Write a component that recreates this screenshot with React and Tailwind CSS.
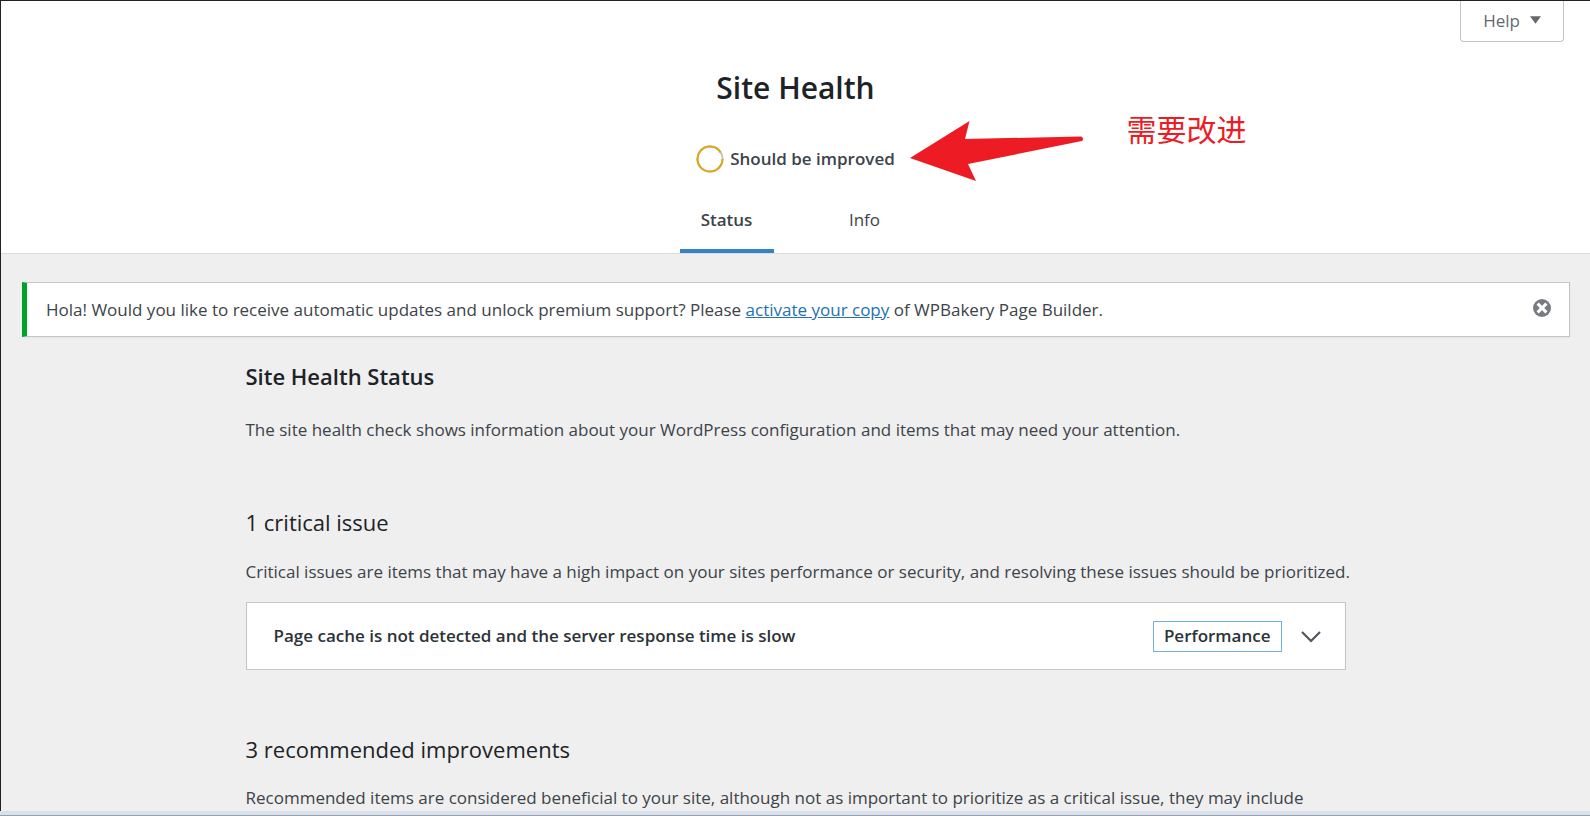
function ProgressRing() {
  return (
    <svg className="size-7" viewBox="0 0 28 28" fill="none" strokeWidth="2" aria-hidden="true">
      <circle cx="14" cy="14" r="12.5" stroke="#c3c4c7" />
      <path d="M26.5 14A12.5 12.5 0 1 1 24.6 7.4" stroke="#dba617" />
    </svg>
  );
}

function Callout() {
  return (
    <div className="absolute left-1/2 top-[106px] ml-[113px] flex gap-[42px]">
      <svg className="mt-[13px] h-[62px] w-[176px]" viewBox="0 0 176 62" fill="#ed1c24" aria-hidden="true">
        <path d="M1 38 60.5 1 56 19 172 16.5a2.5 2.5 0 0 1 .8 4.6L59 44l8 17z" />
      </svg>
      <p className="whitespace-nowrap font-['Noto_Sans_CJK_SC',sans-serif] text-[30px] leading-[42px] text-[#ed1c24]">
        需要改进
      </p>
    </div>
  );
}

function Header() {
  return (
    <header className="relative flex flex-col items-center border-b border-[#dcdcde] bg-white">
      <button
        type="button"
        className="absolute right-[26px] top-0 flex h-[41px] items-center gap-2.5 rounded-b border border-t-0 border-[#c3c4c7] px-[22px] text-[#646970]"
      >
        Help
        <svg className="mb-0.5 h-2 w-[11px]" viewBox="0 0 12 8" fill="currentColor" aria-hidden="true">
          <path d="M0 0h12L6 8z" />
        </svg>
      </button>
      <h1 className="mt-16 text-[30px] font-semibold leading-[46px] text-[#1d2327]">Site Health</h1>
      <div className="mt-[34px] flex h-7 items-center gap-1.5 font-semibold">
        <ProgressRing />
        <span>Should be improved</span>
      </div>
      <nav className="mt-6 grid grid-cols-2 gap-11">
        <a href="#status" className="flex h-[56px] w-[94px] justify-center border-b-4 border-[#3582c4] pt-[9px] font-semibold">
          Status
        </a>
        <a href="#info" className="flex h-[56px] w-[94px] justify-center pt-[9px]">
          Info
        </a>
      </nav>
      <Callout />
    </header>
  );
}

function Notice() {
  return (
    <div className="ml-[21px] mr-5 mt-7 flex items-center justify-between border border-l-[5px] border-[#c3c4c7] border-l-[#00a32a] bg-white pb-3 pl-[19px] pr-[18px] pt-[13px] shadow-xs">
      <p>
        Hola! Would you like to receive automatic updates and unlock premium support? Please{" "}
        <a href="#activate" className="text-[#2271b1] underline">activate your copy</a> of WPBakery Page Builder.
      </p>
      <button type="button" aria-label="Dismiss this notice" className="mb-1">
        <svg className="size-[18px]" viewBox="0 0 18 18" aria-hidden="true">
          <circle cx="9" cy="9" r="9" fill="#787c82" />
          <path d="m4.6 4.6 8.8 8.8m0-8.8-8.8 8.8" stroke="#fff" strokeWidth="3" />
        </svg>
      </button>
    </div>
  );
}

function Issue({ title, badge }) {
  return (
    <button
      type="button"
      className="mt-4 flex h-[68px] w-full items-center border border-[#c3c4c7] bg-white pl-[27px] pr-6 text-left font-semibold text-[#2c3338]"
    >
      <span className="grow">{title}</span>
      <span className="mr-[19px] border border-[#72aee6] px-[10px] pb-px">{badge}</span>
      <svg className="mt-0.5 h-3 w-5" viewBox="0 0 20 12" fill="none" stroke="#50575e" strokeWidth="2.2" aria-hidden="true">
        <path d="m1 1 9 9 9-9" />
      </svg>
    </button>
  );
}

export default function App() {
  return (
    <div className="flex h-screen flex-col overflow-hidden bg-[#efefef] font-['Open_Sans','Noto_Sans_CJK_SC',sans-serif] text-[17px] leading-7 text-[#3c434a]">
      <div className="min-h-0 grow overflow-hidden border-l border-t border-[#1d2327]">
        <Header />
        <Notice />
        <main className="mx-auto mt-[25px] max-w-[1100px]">
          <h2 className="text-[22px] font-semibold leading-7 text-[#1d2327]">Site Health Status</h2>
          <p className="mt-[26px]">
            The site health check shows information about your WordPress configuration and items that may need your attention.
          </p>
          <h3 className="mt-16 text-[22px] leading-7 text-[#1d2327]">1 critical issue</h3>
          <p className="mt-[22px] lg:whitespace-nowrap">
            Critical issues are items that may have a high impact on your sites performance or security, and resolving these issues should be prioritized.
          </p>
          <Issue title="Page cache is not detected and the server response time is slow" badge="Performance" />
          <h3 className="mt-[65px] text-[22px] leading-7 text-[#1d2327]">3 recommended improvements</h3>
          <p className="mt-[21px]">
            Recommended items are considered beneficial to your site, although not as important to prioritize as a critical issue, they may include
          </p>
        </main>
      </div>
      <div className="h-[5px] shrink-0 border-b border-[#9a9fb0] bg-[#d9e2ea]" />
    </div>
  );
}
